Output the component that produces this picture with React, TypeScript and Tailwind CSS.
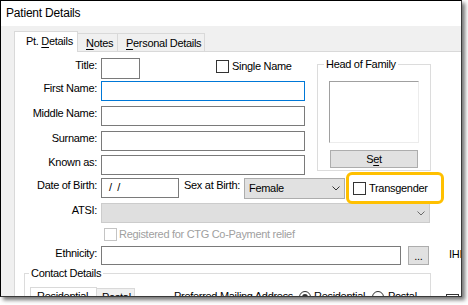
import type { ReactNode } from "react";

function Check({ disabled = false }: { disabled?: boolean }) {
  return (
    <span
      className={`block h-[13px] w-[13px] shrink-0 border bg-white ${
        disabled ? "border-[#c4c4c4]" : "border-[#333333]"
      }`}
    />
  );
}

function Radio({ checked = false }: { checked?: boolean }) {
  return (
    <span className="flex h-[12px] w-[12px] shrink-0 items-center justify-center rounded-full border border-[#333333] bg-white">
      {checked && <span className="h-[6px] w-[6px] rounded-full bg-[#333333]" />}
    </span>
  );
}

function Chevron({ color = "#333333" }: { color?: string }) {
  return (
    <svg width="8" height="5" viewBox="0 0 8 5" className="shrink-0">
      <path d="M0.5 0.5 L4 4 L7.5 0.5" stroke={color} strokeWidth="1" fill="none" />
    </svg>
  );
}

function Label({ children }: { children: ReactNode }) {
  return <div className="w-[82px] shrink-0 pt-[1px] text-right">{children}</div>;
}

function TextBox({ className = "", focused = false, children }: { className?: string; focused?: boolean; children?: ReactNode }) {
  return (
    <div
      className={`ml-[4px] h-[20px] shrink-0 border bg-white ${
        focused ? "border-[#0078d7]" : "border-[#7a7a7a]"
      } ${className}`}
    >
      {children}
    </div>
  );
}

export default function App() {
  return (
    <div className="h-[305px] w-[468px] overflow-hidden bg-white font-['Liberation_Sans',Arial,sans-serif] text-[11px] leading-[13px] tracking-[-0.3px] text-black">
      <div className="flex h-[297px] w-[462px] flex-col overflow-hidden border border-black border-r-[#3a3a3a] border-b-[#3a3a3a] bg-[#f0f0f0] shadow-[3px_3px_4px_rgba(0,0,0,0.55)]">
        {/* title bar */}
        <div className="h-[25px] shrink-0 bg-white pl-[5px] pt-[5px] text-[12px] leading-[15px] tracking-[-0.2px]">
          Patient Details
        </div>

        <div className="flex flex-1 flex-col pl-[13px] pt-[5px]">
          {/* tabs */}
          <div className="flex h-[21px] shrink-0 items-end">
            <div className="h-[21px] w-[64px] border-x border-t border-[#d9d9d9] bg-white pl-[11px] pt-[3px]">
              Pt. <span className="underline underline-offset-2">D</span>etails
            </div>
            <div className="h-[19px] w-[40px] border-t border-r border-b border-[#d9d9d9] pl-[8px] pt-[3px]">
              <span className="underline underline-offset-2">N</span>otes
            </div>
            <div className="h-[19px] w-[87px] border-t border-r border-b border-[#d9d9d9] pl-[8px] pt-[3px] whitespace-nowrap">
              <span className="underline underline-offset-2">P</span>ersonal Details
            </div>
            <div className="h-[19px] flex-1 border-b border-[#d9d9d9]" />
          </div>

          {/* tab page */}
          <div className="flex flex-1 flex-col border-l border-[#d9d9d9] bg-white pt-[6px]">
            <div className="flex items-start">
              <div className="flex w-[290px] shrink-0 flex-col">
                <div className="flex h-[21px] items-start">
                  <Label>Title:</Label>
                  <div className="ml-[4px] h-[21px] w-[39px] border border-[#7a7a7a] bg-white" />
                  <div className="ml-[76px] mt-[2px] flex h-[13px] items-center gap-[3px] whitespace-nowrap">
                    <Check />
                    <span>Single Name</span>
                  </div>
                </div>
                <div className="mt-[2px] flex h-[20px] items-start">
                  <Label>First Name:</Label>
                  <TextBox focused className="w-[204px]" />
                </div>
                <div className="mt-[5px] flex h-[20px] items-start">
                  <Label>Middle Name:</Label>
                  <TextBox className="w-[204px]" />
                </div>
                <div className="mt-[5px] flex h-[20px] items-start">
                  <Label>Surname:</Label>
                  <TextBox className="w-[204px]" />
                </div>
                <div className="mt-[4px] flex h-[20px] items-start">
                  <Label>Known as:</Label>
                  <TextBox className="w-[204px]" />
                </div>
              </div>

              <fieldset className="ml-[12px] h-[113px] w-[114px] shrink-0 border border-[#dcdcdc]">
                <legend className="ml-[6px] px-[2px] whitespace-nowrap">Head of Family</legend>
                <div className="ml-[11px] mt-[10px] h-[62px] w-[90px] border border-t-[#a0a0a0] border-l-[#a0a0a0] border-r-[#ececec] border-b-[#ececec] bg-white" />
                <div className="ml-[12px] mt-[7px] flex h-[18px] w-[88px] items-center justify-center border border-[#adadad] bg-[#e1e1e1]">
                  S<span className="underline underline-offset-2">e</span>t
                </div>
              </fieldset>
            </div>

            {/* date of birth row */}
            <div className="mt-[3px] flex h-[20px] items-start">
              <Label>Date of Birth:</Label>
              <TextBox className="w-[78px] pl-[7px] pt-[2px] whitespace-pre">{"/  /"}</TextBox>
              <div className="ml-[5px] w-[60px] shrink-0 pt-[1px] whitespace-nowrap">Sex at Birth:</div>
              <div className="flex h-[21px] w-[101px] shrink-0 items-center justify-between border border-[#adadad] bg-[#e1e1e1] pl-[4px] pr-[4px]">
                <span>Female</span>
                <Chevron />
              </div>
              <div className="relative ml-[8px] flex h-[20px] items-center gap-[3px] whitespace-nowrap">
                <Check />
                <span>Transgender</span>
                <div className="pointer-events-none absolute -left-[7px] -top-[6px] h-[32px] w-[98px] rounded-[6px] border-[3px] border-[#ffc000]" />
              </div>
            </div>

            {/* ATSI */}
            <div className="mt-[5px] flex h-[20px] items-start">
              <Label>ATSI:</Label>
              <div className="ml-[4px] flex h-[20px] w-[329px] shrink-0 items-center justify-end border border-[#cccccc] bg-[#dfdfdf] pr-[4px]">
                <Chevron color="#6a6a6a" />
              </div>
            </div>

            {/* registered */}
            <div className="mt-[5px] flex h-[13px] items-center whitespace-nowrap">
              <div className="w-[89px] shrink-0" />
              <Check disabled />
              <span className="ml-[2px] text-[#a0a0a0]">Registered for CTG Co-Payment relief</span>
            </div>

            {/* ethnicity */}
            <div className="mt-[5px] flex h-[19px] items-start whitespace-nowrap">
              <Label>Ethnicity:</Label>
              <TextBox className="!h-[19px] w-[300px]" />
              <div className="ml-[7px] flex h-[19px] w-[21px] shrink-0 items-end justify-center border border-[#adadad] bg-[#e1e1e1] pb-[3px] leading-[10px]">
                ...
              </div>
              <div className="ml-[20px] pt-[2px]">IHI Number</div>
            </div>

            {/* contact details */}
            <div className="mt-[2px] flex items-start">
              <fieldset className="ml-[9px] h-[60px] w-[407px] shrink-0 border border-[#dcdcdc]">
                <legend className="ml-[4px] px-[2px] whitespace-nowrap">Contact Details</legend>
                <div className="ml-[5px] mt-[7px] flex items-start whitespace-nowrap">
                  <div className="h-[20px] w-[67px] shrink-0 border-x border-t border-[#d9d9d9] bg-white pl-[6px] pt-[2px]">
                    Residential
                  </div>
                  <div className="mt-[1px] h-[19px] w-[38px] shrink-0 border-t border-r border-[#d9d9d9] bg-[#f0f0f0] pl-[5px] pt-[2px]">
                    Postal
                  </div>
                  <div className="ml-[39px] w-[125px] shrink-0 pt-[3px]">Preferred Mailing Address</div>
                  <div className="mt-[4px]">
                    <Radio checked />
                  </div>
                  <div className="ml-[3px] w-[58px] shrink-0 pt-[3px]">Residential</div>
                  <div className="mt-[4px]">
                    <Radio />
                  </div>
                  <div className="ml-[4px] pt-[3px]">Postal</div>
                </div>
              </fieldset>
              <div className="ml-[15px] mt-[27px]">
                <Check />
              </div>
            </div>
          </div>
        </div>
      </div>
    </div>
  );
}
